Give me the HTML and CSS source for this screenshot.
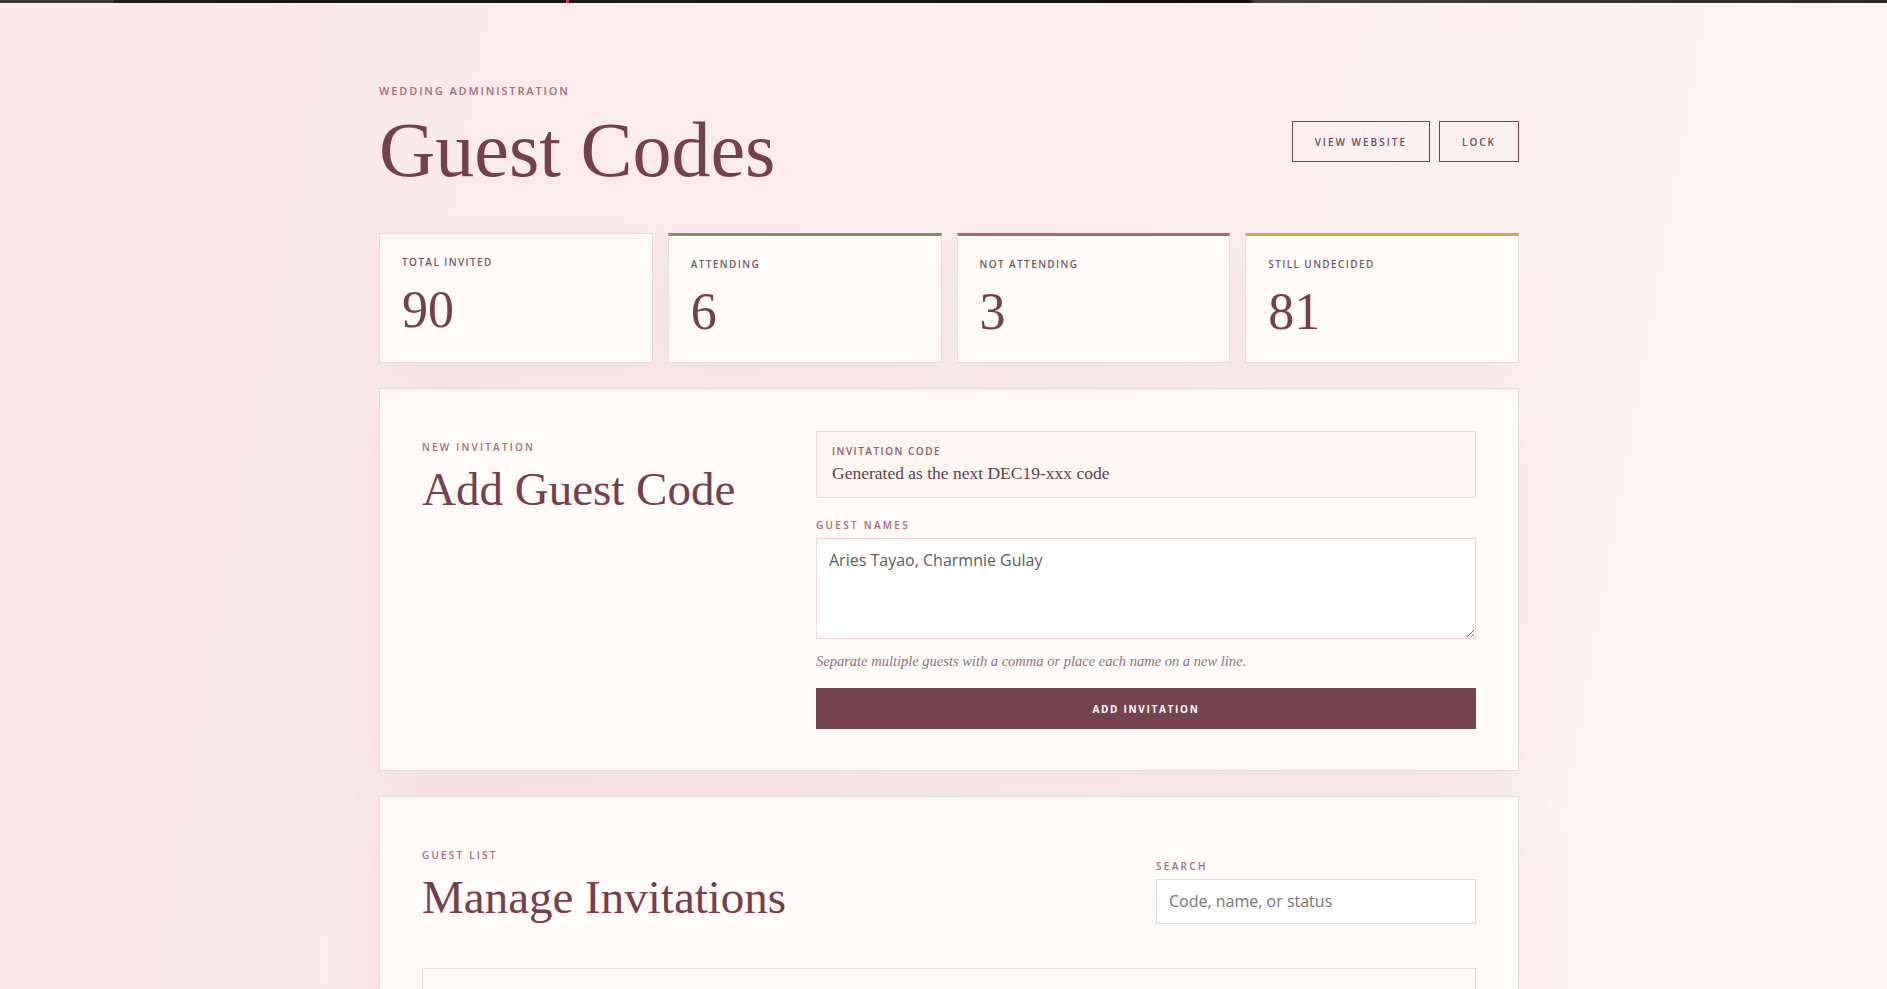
FILE: index.html
```html
<!DOCTYPE html>
<html lang="en">
<head>
<meta charset="utf-8">
<title>Guest Codes</title>
<link rel="stylesheet" href="styles.css">
</head>
<body>
<div class="topbar"></div>
<main class="page">
  <header class="page-head">
    <div class="title-block">
      <p class="eyebrow">Wedding Administration</p>
      <h1 class="page-title">Guest Codes</h1>
    </div>
    <div class="head-actions">
      <a class="btn-outline" href="#">View Website</a>
      <a class="btn-outline" href="#">Lock</a>
    </div>
  </header>

  <section class="stats">
    <div class="stat">
      <p class="stat-label">Total Invited</p>
      <p class="stat-value">90</p>
    </div>
    <div class="stat stat-green">
      <p class="stat-label">Attending</p>
      <p class="stat-value">6</p>
    </div>
    <div class="stat stat-rose">
      <p class="stat-label">Not Attending</p>
      <p class="stat-value">3</p>
    </div>
    <div class="stat stat-gold">
      <p class="stat-label">Still Undecided</p>
      <p class="stat-value">81</p>
    </div>
  </section>

  <section class="panel form-panel">
    <div class="intro">
      <p class="kicker">New Invitation</p>
      <h2 class="section-title">Add Guest Code</h2>
    </div>
    <form class="invite-form">
      <div class="code-box">
        <p class="code-label">Invitation Code</p>
        <p class="code-value">Generated as the next DEC19-xxx code</p>
      </div>
      <label class="field-label" for="names">Guest Names</label>
      <textarea id="names" class="names-input">Aries Tayao, Charmnie Gulay</textarea>
      <p class="hint">Separate multiple guests with a comma or place each name on a new line.</p>
      <button type="button" class="btn-primary">Add Invitation</button>
    </form>
  </section>

  <section class="panel list-panel">
    <div class="list-head">
      <div class="intro">
        <p class="kicker">Guest List</p>
        <h2 class="section-title">Manage Invitations</h2>
      </div>
      <div class="search">
        <label class="field-label" for="search">Search</label>
        <input id="search" class="search-input" type="text" placeholder="Code, name, or status">
      </div>
    </div>
    <div class="table-box"></div>
  </section>
</main>
</body>
</html>
```

FILE: styles.css
```css
* { box-sizing: border-box; }

html, body { margin: 0; }

body {
  padding-left: 11px;
  min-height: 100vh;
  background: linear-gradient(100deg, #fbe8e9 0%, #fcedec 45%, #fef5f3 100%);
  font-family: "Open Sans", "Liberation Sans", sans-serif;
  color: #74404d;
}

.topbar {
  height: 3px;
  margin-left: -11px;
  background: linear-gradient(90deg,
    #3c3939 0, #3c3939 114px,
    #1c1a1a 114px, #161313 566px,
    #d2414f 566px, #d2414f 569px,
    #1d1a1a 569px, #141111 1250px,
    #444242 1255px, #2a2727 1887px);
}

.page {
  width: 1140px;
  margin: 0 auto;
  padding-top: 80px;
  padding-bottom: 60px;
}

/* Header */
.page-head {
  display: flex;
  justify-content: space-between;
  align-items: flex-end;
}

.eyebrow {
  margin: 0;
  font-size: 11px;
  line-height: 16px;
  font-weight: 600;
  letter-spacing: 0.17em;
  text-transform: uppercase;
  color: #a46b7c;
}

.page-title {
  margin: 12px 0 0;
  font-family: "Liberation Serif", "DejaVu Serif", serif;
  font-weight: 400;
  font-size: 78px;
  line-height: 1;
  color: #74404d;
}

.head-actions {
  display: flex;
  gap: 9px;
  margin-bottom: 27px;
}

.btn-outline {
  display: inline-flex;
  align-items: center;
  height: 41px;
  padding: 0 22px;
  border: 1px solid #76424f;
  font-size: 10px;
  font-weight: 600;
  letter-spacing: 0.2em;
  text-transform: uppercase;
  color: #6b4a5c;
  text-decoration: none;
}

/* Stats */
.stats {
  display: grid;
  grid-template-columns: repeat(4, 1fr);
  gap: 15px;
  margin-top: 44px;
}

.stat {
  background: #fffbf9;
  border: 1px solid #eddadd;
  padding: 21px 22px 24px;
  box-shadow: 0 16px 40px rgba(170, 95, 110, 0.07);
}

.stat-green { border-top: 3px solid #7b9466; }
.stat-rose  { border-top: 3px solid #a86a7b; }
.stat-gold  { border-top: 3px solid #d1a64c; }

.stat-label {
  margin: 0;
  font-size: 10px;
  line-height: 15px;
  font-weight: 600;
  letter-spacing: 0.14em;
  text-transform: uppercase;
  color: #6e5c61;
}

.stat-value {
  margin: 14px 0 0;
  font-family: "Liberation Serif", "DejaVu Serif", serif;
  font-size: 52px;
  line-height: 1;
  color: #74404d;
}

/* Panels */
.panel {
  background: #fffbf9;
  border: 1px solid #eddadd;
  padding: 42px 42px 41px;
  margin-top: 25px;
  box-shadow: 0 20px 50px rgba(170, 95, 110, 0.09);
}

.form-panel {
  display: grid;
  grid-template-columns: minmax(0, 1fr) 660px;
  gap: 48px;
}

.intro { padding-top: 9px; }

.kicker {
  margin: 0;
  font-size: 10px;
  line-height: 15px;
  font-weight: 600;
  letter-spacing: 0.22em;
  text-transform: uppercase;
  color: #a46b7c;
}

.section-title {
  margin: 9px 0 0;
  font-family: "Liberation Serif", "DejaVu Serif", serif;
  font-weight: 400;
  font-size: 47px;
  line-height: 1.1;
  color: #74404d;
}

.invite-form {
  display: flex;
  flex-direction: column;
}

.code-box {
  background: #fdf7f4;
  border: 1px solid #eddadd;
  padding: 12px 15px;
}

.code-label {
  margin: 0;
  font-size: 10px;
  line-height: 15px;
  font-weight: 600;
  letter-spacing: 0.15em;
  text-transform: uppercase;
  color: #8f5b6a;
}

.code-value {
  margin: 2px 0 0;
  font-family: "Liberation Serif", "DejaVu Serif", serif;
  font-size: 17.5px;
  line-height: 24px;
  color: #5e4148;
}

.field-label {
  display: block;
  margin: 0 0 5px;
  font-size: 10px;
  line-height: 15px;
  font-weight: 600;
  letter-spacing: 0.23em;
  text-transform: uppercase;
  color: #a46b7c;
}

.invite-form .field-label { margin-top: 20px; }

.names-input {
  display: block;
  width: 100%;
  height: 101px;
  padding: 10px 12px;
  background: #ffffff;
  border: 1px solid #eddadd;
  border-radius: 0;
  font-family: "Open Sans", "Liberation Sans", sans-serif;
  font-size: 16px;
  line-height: 23px;
  color: #5c5c5c;
  resize: vertical;
  outline: none;
}

.hint {
  margin: 12px 0 0;
  font-family: "Liberation Serif", "DejaVu Serif", serif;
  font-style: italic;
  font-size: 14.5px;
  line-height: 20px;
  color: #8a7377;
}

.btn-primary {
  margin-top: 17px;
  height: 41px;
  border: 0;
  background: #76424f;
  color: #ffffff;
  font-family: "Open Sans", "Liberation Sans", sans-serif;
  font-size: 10px;
  font-weight: 700;
  letter-spacing: 0.17em;
  text-transform: uppercase;
}

/* List panel */
.list-head {
  display: flex;
  justify-content: space-between;
  align-items: flex-end;
}

.search { width: 320px; }

.search-input {
  display: block;
  width: 100%;
  height: 45px;
  padding: 0 12px;
  background: #ffffff;
  border: 1px solid #e9d6da;
  border-radius: 0;
  font-family: "Open Sans", "Liberation Sans", sans-serif;
  font-size: 16px;
  color: #5c5c5c;
  outline: none;
}

.search-input::placeholder { color: #767676; }

.table-box {
  margin-top: 44px;
  min-height: 220px;
  background: #fffaf8;
  border: 1px solid #eddadd;
}
```
